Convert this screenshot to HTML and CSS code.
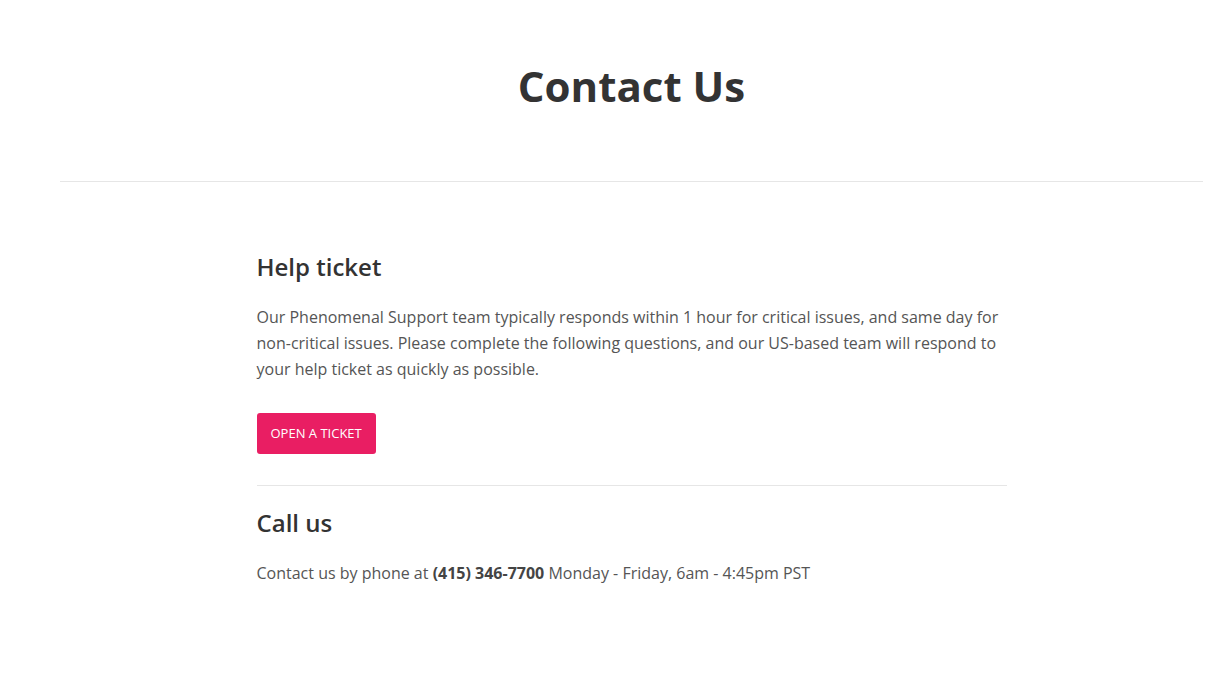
FILE: index.html
```html
<!DOCTYPE html>
<html lang="en">
<head>
<meta charset="utf-8">
<title>Contact Us</title>
<link rel="stylesheet" href="styles.css">
</head>
<body>
<div class="page">
  <header class="page-header">
    <h1 class="page-title">Contact Us</h1>
  </header>
  <main class="content">
    <section class="block">
      <h2 class="block-title">Help ticket</h2>
      <p class="block-text">Our Phenomenal Support team typically responds within 1 hour for critical issues, and same day for non-critical issues. Please complete the following questions, and our US-based team will respond to your help ticket as quickly as possible.</p>
      <a class="btn" href="#">OPEN A TICKET</a>
    </section>
    <section class="block block-call">
      <h2 class="block-title">Call us</h2>
      <p class="block-text">Contact us by phone at <strong>(415) 346-7700</strong> Monday - Friday, 6am - 4:45pm PST</p>
    </section>
  </main>
</div>
</body>
</html>
```

FILE: styles.css
```css
html, body {
  margin: 0;
  padding: 0;
  background: #ffffff;
}
body {
  font-family: "Open Sans", "Liberation Sans", sans-serif;
  color: #555555;
}
.page {
  padding: 0 8px 0 60px;
}
.page-header {
  padding: 59px 0 69px;
  border-bottom: 1px solid #e6e6e6;
  text-align: center;
}
.page-title {
  margin: 0;
  font-size: 42px;
  line-height: 53px;
  font-weight: 700;
  color: #333333;
}
.content {
  width: 750px;
  margin: 0 auto;
  padding-top: 70px;
}
.block-title {
  margin: 0;
  font-size: 24px;
  line-height: 29px;
  font-weight: 600;
  color: #333333;
}
.block-text {
  margin: 23px 0 0;
  font-size: 16px;
  line-height: 26px;
  color: #555555;
}
.block-text strong {
  font-weight: 700;
  color: #444444;
}
.btn {
  display: inline-block;
  margin-top: 31px;
  padding: 0 14px;
  height: 41px;
  line-height: 41px;
  background: #e91e63;
  color: #ffffff;
  font-size: 13px;
  text-decoration: none;
  border-radius: 3px;
}
.block-call {
  margin-top: 31px;
  border-top: 1px solid #e6e6e6;
  padding-top: 22px;
}
```
